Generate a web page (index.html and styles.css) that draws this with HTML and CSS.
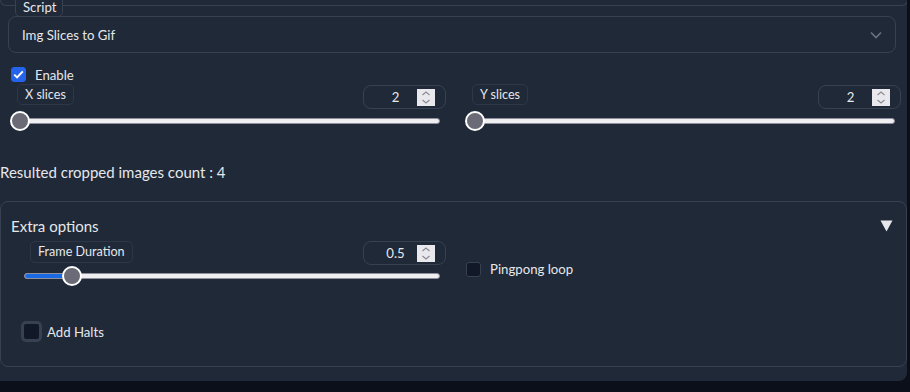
FILE: index.html
```html
<!DOCTYPE html>
<html lang="en">
<head>
    <meta charset="UTF-8">
    <meta name="viewport" content="width=device-width, initial-scale=1.0">
    <title>Img Slices to Gif</title>
    <link rel="stylesheet" href="styles.css">
</head>
<body>

    <div class="panel">
        <div class="prev-block"></div>

        <div class="script-field">
            <span class="chip script-chip">Script</span>
            <div class="dropdown">
                <span>Img Slices to Gif</span>
                <svg class="chevron" width="12" height="8" viewBox="0 0 12 8"><path d="M1 1.5 L6 6.5 L11 1.5" fill="none" stroke="#6b7280" stroke-width="1.6"/></svg>
            </div>
        </div>

        <label class="check-row enable">
            <span class="box checked"><svg width="11" height="9" viewBox="0 0 11 9"><path d="M1.2 4.6 L4.1 7.4 L9.8 1.4" fill="none" stroke="#fff" stroke-width="2"/></svg></span>
            Enable
        </label>

        <div class="two-col slices">
            <div class="slider-field">
                <div class="field-head">
                    <span class="chip">X slices</span>
                    <div class="num">
                        <span class="num-val">2</span>
                        <span class="spin"><svg width="18" height="17" viewBox="0 0 18 17"><path d="M5.5 6 L9 3 L12.5 6 M5.5 11 L9 14 L12.5 11" fill="none" stroke="#8b8b93" stroke-width="1.2"/></svg></span>
                    </div>
                </div>
                <div class="range">
                    <div class="track"></div>
                    <span class="thumb" style="left: 0px"></span>
                </div>
            </div>
            <div class="slider-field">
                <div class="field-head">
                    <span class="chip">Y slices</span>
                    <div class="num">
                        <span class="num-val">2</span>
                        <span class="spin"><svg width="18" height="17" viewBox="0 0 18 17"><path d="M5.5 6 L9 3 L12.5 6 M5.5 11 L9 14 L12.5 11" fill="none" stroke="#8b8b93" stroke-width="1.2"/></svg></span>
                    </div>
                </div>
                <div class="range">
                    <div class="track"></div>
                    <span class="thumb" style="left: 0px"></span>
                </div>
            </div>
        </div>

        <p class="result">Resulted cropped images count : 4</p>

        <div class="accordion">
            <div class="acc-head">
                <span>Extra options</span>
                <svg width="13" height="12" viewBox="0 0 13 12"><polygon points="0.5,0.5 12.5,0.5 6.5,11.5" fill="#e5e7eb"/></svg>
            </div>
            <div class="two-col extra">
                <div class="slider-field">
                    <div class="field-head">
                        <span class="chip">Frame Duration</span>
                        <div class="num">
                            <span class="num-val">0.5</span>
                            <span class="spin"><svg width="18" height="17" viewBox="0 0 18 17"><path d="M5.5 6 L9 3 L12.5 6 M5.5 11 L9 14 L12.5 11" fill="none" stroke="#8b8b93" stroke-width="1.2"/></svg></span>
                        </div>
                    </div>
                    <div class="range">
                        <div class="track"><div class="fill" style="width: 49px"></div></div>
                        <span class="thumb" style="left: 39px"></span>
                    </div>
                </div>
                <label class="check-row pingpong">
                    <span class="box"></span>
                    Pingpong loop
                </label>
            </div>
            <label class="check-row halts">
                <span class="box ring"></span>
                Add Halts
            </label>
        </div>
    </div>

</body>
</html>
```

FILE: styles.css
```css
body {
    margin: 0;
    background-color: #0b0f19;
    font-family: Lato, "Liberation Sans", sans-serif;
    color: #e5e7eb;
}

.panel {
    position: relative;
    width: 907px;
    height: 381px;
    background-color: #1f2937;
    border-radius: 0 0 8px 0;
    overflow: hidden;
}

.prev-block {
    height: 5px;
    width: 906px;
    border: 1px solid #374151;
    border-top: none;
    border-radius: 0 0 8px 8px;
}

.script-field {
    position: relative;
    padding-top: 10px;
}

.chip {
    display: inline-block;
    padding: 0 7px;
    height: 19px;
    line-height: 19px;
    font-size: 12.6px;
    border: 1px solid #2d3748;
    border-radius: 5px;
    color: #e5e7eb;
}

.script-chip {
    position: absolute;
    top: -12px;
    left: 15px;
    width: 32px;
    height: 21px;
    line-height: 24px;
    text-align: center;
    font-size: 13.2px;
    border-color: #374151;
    border-radius: 0 0 5px 5px;
    background-color: #1f2937;
}

.dropdown {
    display: flex;
    align-items: center;
    justify-content: space-between;
    margin: 0 11px 0 8px;
    height: 37px;
    box-sizing: border-box;
    padding: 0 13px 0 13px;
    border: 1px solid #374151;
    border-radius: 8px;
    font-size: 13.2px;
}

.check-row {
    display: flex;
    align-items: center;
    font-size: 13.2px;
}

.box {
    display: flex;
    align-items: center;
    justify-content: center;
    width: 15px;
    height: 15px;
    box-sizing: border-box;
    border: 1px solid #374151;
    border-radius: 3px;
    background-color: #111827;
    margin-right: 9px;
}

.box.checked {
    background-color: #2563eb;
    border-color: #2563eb;
}

.box.ring {
    width: 21px;
    height: 21px;
    border: 3px solid #374151;
    border-radius: 5px;
    margin-right: 5px;
}

.enable {
    margin: 14px 0 0 11px;
    height: 15px;
}

.two-col {
    display: grid;
    grid-template-columns: 1fr 1fr;
}

.slices {
    margin: 2px 6px 0 10px;
    column-gap: 19px;
}

.field-head {
    display: flex;
    justify-content: space-between;
    align-items: flex-start;
    padding-left: 7px;
    height: 25px;
}

.num {
    display: flex;
    align-items: center;
    margin-top: 1px;
    width: 83px;
    height: 24px;
    box-sizing: border-box;
    padding: 0 10px;
    border: 1px solid #374151;
    border-radius: 8px;
    font-size: 13.2px;
}

.num-val {
    flex: 1;
    text-align: center;
}

.spin {
    display: flex;
    width: 18px;
    height: 17px;
    background-color: #e9e9ed;
}

.range {
    position: relative;
    height: 20px;
    margin: 2px 6px 0 0;
}

.track {
    position: absolute;
    left: 1px;
    right: 0;
    top: 7px;
    height: 6px;
    box-sizing: border-box;
    background-color: #efeff2;
    border: 1px solid #8f8f9d;
    border-radius: 3px;
    overflow: hidden;
}

.fill {
    height: 100%;
    background-color: #1b6ae5;
}

.thumb {
    position: absolute;
    top: 0;
    width: 20px;
    height: 20px;
    box-sizing: border-box;
    border: 2px solid #fff;
    border-radius: 50%;
    background-color: #6b6b77;
}

.result {
    margin: 31px 0 0 0;
    line-height: 20px;
    font-size: 15px;
}

.accordion {
    margin-top: 19px;
    height: 166px;
    box-sizing: border-box;
    border: 1px solid #374151;
    border-radius: 8px;
    padding-top: 14px;
}

.acc-head {
    display: flex;
    justify-content: space-between;
    align-items: center;
    height: 20px;
    padding: 0 13px 0 10px;
    font-size: 15px;
}

.extra {
    margin: 5px 0 0 22px;
    grid-template-columns: 423px 1fr;
    column-gap: 20px;
}

.extra .range {
    margin-top: 1px;
}

.extra .field-head {
    height: 24px;
}

.extra .num {
    margin-top: 0;
}

.extra .chip {
    height: 20px;
    line-height: 20px;
}

.pingpong {
    align-self: start;
    margin-top: 20px;
}

.halts {
    margin: 35px 0 0 20px;
}
```
